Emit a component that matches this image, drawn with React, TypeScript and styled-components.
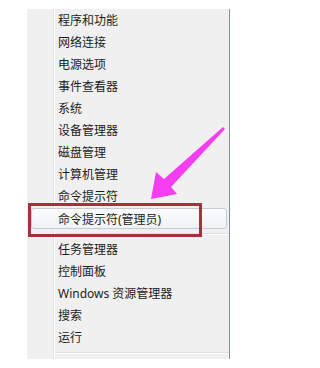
import React from "react";
import styled, { createGlobalStyle } from "styled-components";

type MenuEntry = { label: string; active?: boolean } | { separator: true };

const entries: MenuEntry[] = [
  { label: "程序和功能" },
  { label: "网络连接" },
  { label: "电源选项" },
  { label: "事件查看器" },
  { label: "系统" },
  { label: "设备管理器" },
  { label: "磁盘管理" },
  { label: "计算机管理" },
  { label: "命令提示符" },
  { label: "命令提示符(管理员)", active: true },
  { separator: true },
  { label: "任务管理器" },
  { label: "控制面板" },
  { label: "Windows 资源管理器" },
  { label: "搜索" },
  { label: "运行" },
  { separator: true },
];

const GlobalStyle = createGlobalStyle`
  html, body {
    margin: 0;
    padding: 0;
    background: #ffffff;
  }
  body {
    width: 262px;
    height: 368px;
    overflow: hidden;
    font-family: "Noto Sans", "Noto Sans CJK SC", sans-serif;
  }
`;

const Page = styled.div`
  position: relative;
  width: 262px;
  height: 368px;
  padding: 9px 0 0 27px;
  box-sizing: border-box;
`;

const Menu = styled.div`
  position: relative;
  width: 203px;
  box-sizing: border-box;
  background: #f0f0f0;
  border-right: 1px solid #7f9090;
  padding-bottom: 2px;
  display: flex;
  flex-direction: column;

  /* icon gutter line */
  &::before {
    content: "";
    position: absolute;
    top: 0;
    bottom: 0;
    left: 26px;
    width: 1px;
    background: #e2e3e3;
    box-shadow: 1px 0 0 #ffffff;
  }
`;

const Item = styled.div<{ $active?: boolean }>`
  position: relative;
  height: ${(p) => (p.$active ? "21px" : "22px")};
  margin: ${(p) => (p.$active ? "1px 2px 0 4px" : "0")};
  padding-left: ${(p) => (p.$active ? "26px" : "31px")};
  box-sizing: border-box;
  display: flex;
  align-items: center;
  font-size: 12px;
  color: #1c1c1c;
  white-space: nowrap;
  border: ${(p) => (p.$active ? "1px solid #c3cbd5" : "none")};
  border-radius: ${(p) => (p.$active ? "3px" : "0")};
  background: ${(p) =>
    p.$active ? "linear-gradient(#fbfbfc, #f0f2f4)" : "transparent"};
  z-index: 1;
`;

const Separator = styled.div`
  height: 9px;
  display: flex;
  align-items: center;
  padding-left: 29px;

  &::after {
    content: "";
    flex: 1;
    height: 1px;
    background: #e0e0e0;
    box-shadow: 0 1px 0 #ffffff;
  }
`;

const Callout = styled.div`
  position: absolute;
  left: 28px;
  top: 203px;
  width: 174px;
  height: 34px;
  box-sizing: border-box;
  border: 3px solid #a8303c;
  z-index: 2;
`;

const ArrowLayer = styled.svg`
  position: absolute;
  left: 0;
  top: 0;
  width: 262px;
  height: 368px;
  pointer-events: none;
  z-index: 3;
`;

export default function App() {
  return (
    <>
      <GlobalStyle />
      <Page>
        <Menu>
          {entries.map((e, i) =>
            "separator" in e ? (
              <Separator key={i} />
            ) : (
              <Item key={i} $active={e.active}>
                {e.label}
              </Item>
            )
          )}
        </Menu>
        <Callout />
        <ArrowLayer viewBox="0 0 262 368">
          <polygon
            points="223,127 225,129 171,187 177,194 151,199 156,172 164,179"
            fill="#f53ef2"
          />
        </ArrowLayer>
      </Page>
    </>
  );
}
